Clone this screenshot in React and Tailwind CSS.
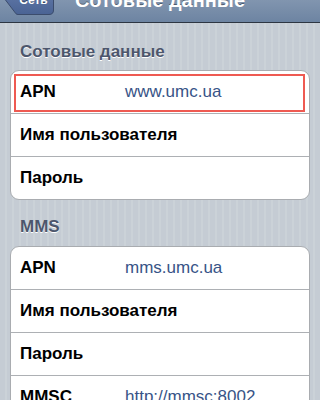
import React from "react";

const font = { fontFamily: '"Liberation Sans", Arial, sans-serif' };

function BackButton() {
  return (
    <div className="relative ml-[5px] w-[49px] h-[30px] shrink-0">
      <svg className="absolute inset-0" width="49" height="30" viewBox="0 0 49 30">
        <defs>
          <linearGradient id="bb" x1="0" y1="0" x2="0" y2="1">
            <stop offset="0" stopColor="#7d91b1" />
            <stop offset="0.5" stopColor="#5870a0" />
            <stop offset="1" stopColor="#4a6394" />
          </linearGradient>
        </defs>
        <path
          d="M0.5 15 L11 1.2 Q11.8 0.5 13 0.5 L44 0.5 Q48.5 0.5 48.5 5 L48.5 25 Q48.5 29.5 44 29.5 L13 29.5 Q11.8 29.5 11 28.8 Z"
          fill="url(#bb)"
          stroke="#3b4c6c"
        />
      </svg>
      <span className="absolute inset-0 flex items-center justify-center pl-[8px] text-white text-[12px] font-bold [text-shadow:0_-1px_0_rgba(0,0,0,0.45)]">
        Сеть
      </span>
    </div>
  );
}

function Row({ label, value, first, highlight }) {
  return (
    <div
      className={`relative flex items-center pl-[9px] ${first ? "h-[42px]" : "h-[43px] border-t border-[#adb0b4]"}`}
    >
      <span className="w-[105px] shrink-0 whitespace-nowrap text-[17px] font-bold text-black">{label}</span>
      {value && <span className="whitespace-nowrap text-[17px] text-[#385487]">{value}</span>}
      {highlight && (
        <div className="absolute top-[3px] left-[3px] right-[4px] bottom-[1px] border-2 border-[#ee5a52]" />
      )}
    </div>
  );
}

function Group({ rows }) {
  return (
    <div className="mx-[10px] bg-white border border-[#a9acb0] rounded-[9px] overflow-hidden">
      {rows.map((r, i) => (
        <Row key={i} {...r} first={i === 0} />
      ))}
    </div>
  );
}

function Header({ children, className }) {
  return (
    <div
      className={`px-[20px] h-[21px] leading-[21px] text-[17px] font-bold text-[#4c566c] [text-shadow:0_1px_0_#fff] ${className}`}
    >
      {children}
    </div>
  );
}

export default function App() {
  return (
    <div
      style={font}
      className="w-[320px] h-[400px] overflow-hidden bg-[repeating-linear-gradient(90deg,#c5ccd4_0px,#c5ccd4_5px,#cbd2d8_5px,#cbd2d8_7px)]"
    >
      <div className="-mt-[22px] h-[45px] flex items-center border-b border-[#2d3642] bg-[linear-gradient(#b0bccd,#889bb3_50%,#8195af_50%,#6d84a2)]">
        <BackButton />
        <div className="flex-1 text-center -ml-[54px] text-white text-[20px] font-bold [text-shadow:0_-1px_0_rgba(0,0,0,0.4)]">
          Сотовые данные
        </div>
      </div>

      <Header className="mt-[18px] mb-[8px]">Сотовые данные</Header>
      <Group
        rows={[
          { label: "APN", value: "www.umc.ua", highlight: true },
          { label: "Имя пользователя" },
          { label: "Пароль" },
        ]}
      />

      <Header className="mt-[16px] mb-[9px]">MMS</Header>
      <Group
        rows={[
          { label: "APN", value: "mms.umc.ua" },
          { label: "Имя пользователя" },
          { label: "Пароль" },
          { label: "MMSC", value: "http://mmsc:8002" },
        ]}
      />
    </div>
  );
}
